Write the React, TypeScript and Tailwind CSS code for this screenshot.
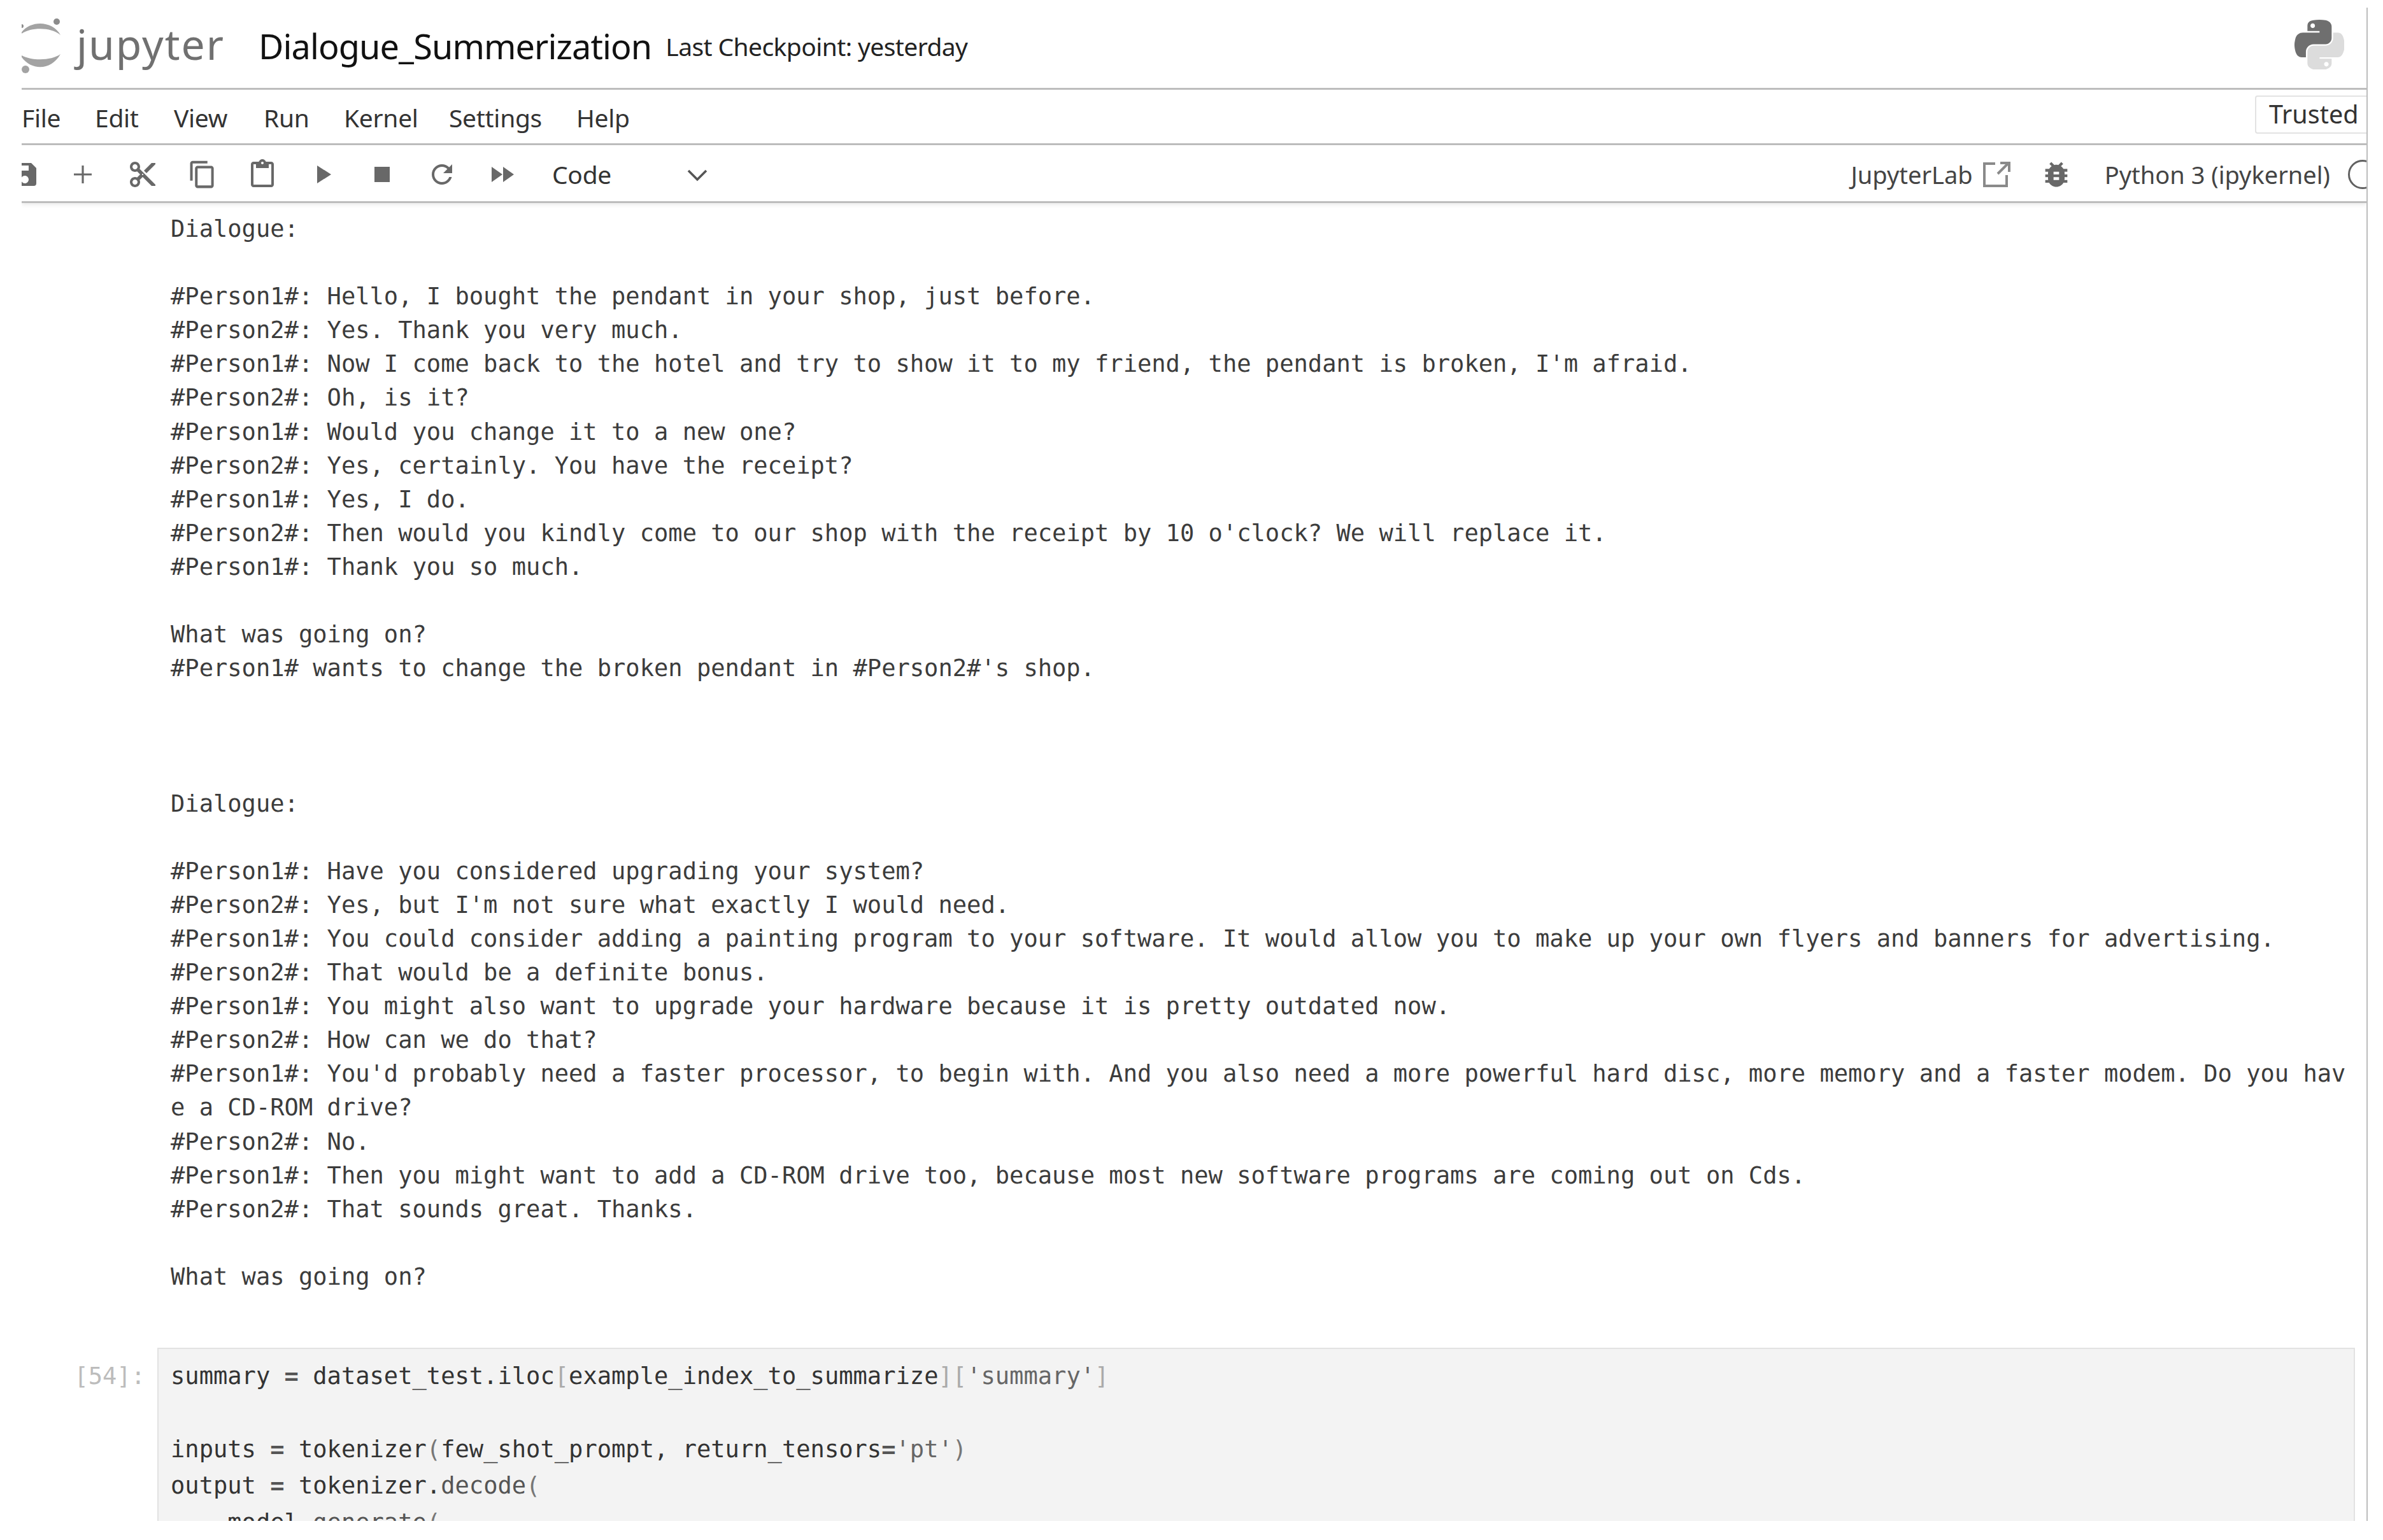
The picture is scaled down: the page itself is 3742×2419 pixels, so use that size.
import type { ReactNode } from "react";

const uiFont = "font-['Noto_Sans',sans-serif]";
const monoFont = "font-['DejaVu_Sans_Mono',monospace]";

const menuItems = [
  { name: "File", width: "w-[115px]" },
  { name: "Edit", width: "w-[124px]" },
  { name: "View", width: "w-[141px]" },
  { name: "Run", width: "w-[126px]" },
  { name: "Kernel", width: "w-[165px]" },
  { name: "Settings", width: "w-[200px]" },
  { name: "Help", width: "w-[110px]" },
];

const output = `Dialogue:

#Person1#: Hello, I bought the pendant in your shop, just before.
#Person2#: Yes. Thank you very much.
#Person1#: Now I come back to the hotel and try to show it to my friend, the pendant is broken, I'm afraid.
#Person2#: Oh, is it?
#Person1#: Would you change it to a new one?
#Person2#: Yes, certainly. You have the receipt?
#Person1#: Yes, I do.
#Person2#: Then would you kindly come to our shop with the receipt by 10 o'clock? We will replace it.
#Person1#: Thank you so much.

What was going on?
#Person1# wants to change the broken pendant in #Person2#'s shop.



Dialogue:

#Person1#: Have you considered upgrading your system?
#Person2#: Yes, but I'm not sure what exactly I would need.
#Person1#: You could consider adding a painting program to your software. It would allow you to make up your own flyers and banners for advertising.
#Person2#: That would be a definite bonus.
#Person1#: You might also want to upgrade your hardware because it is pretty outdated now.
#Person2#: How can we do that?
#Person1#: You'd probably need a faster processor, to begin with. And you also need a more powerful hard disc, more memory and a faster modem. Do you hav
e a CD-ROM drive?
#Person2#: No.
#Person1#: Then you might want to add a CD-ROM drive too, because most new software programs are coming out on Cds.
#Person2#: That sounds great. Thanks.

What was going on?`;

function Icon({ d, className = "w-12 h-12", viewBox = "0 0 24 24" }: { d: string; className?: string; viewBox?: string }) {
  return (
    <svg viewBox={viewBox} className={className} fill="#686868">
      <path d={d} />
    </svg>
  );
}

function ToolButton({ children }: { children: ReactNode }) {
  return <div className="flex w-[94px] shrink-0 items-center justify-center">{children}</div>;
}

function JupyterLogo() {
  return (
    <div className="flex items-center">
      <svg viewBox="0 0 66 90" className="h-[90px] w-[66px] shrink-0">
        <path d="M-3 30C10 6 48 6 61 30C46 17 12 17 -3 30Z" fill="#a3a3a3" />
        <path d="M-3 60C12 87 46 87 61 60C46 71 12 71 -3 60Z" fill="#a3a3a3" />
        <circle cx="55" cy="9" r="5" fill="#8c8c8c" />
        <circle cx="0" cy="16" r="3" fill="#8c8c8c" />
        <circle cx="6" cy="84" r="6" fill="#a3a3a3" />
      </svg>
      <span className="ml-[20px] w-[286px] -mt-[4px] text-[66px] leading-none tracking-[2px] text-[#707070]">jupyter</span>
    </div>
  );
}

function PythonLogo() {
  return (
    <svg viewBox="0 0 110 110" className="w-[78px] h-[78px]">
      <path
        fill="#6f6f6f"
        d="M54.9 0C50.3 0 46 .4 42.1 1.1 30.8 3.1 28.7 7.3 28.7 15v10.2h26.8v3.4H18.6c-7.8 0-14.6 4.7-16.7 13.6-2.5 10.2-2.6 16.6 0 27.3 1.9 7.9 6.5 13.6 14.2 13.6h9.2V71c0-8.8 7.7-16.7 16.8-16.7h26.8c7.4 0 13.4-6.1 13.4-13.6V15c0-7.3-6.1-12.7-13.4-13.9C64.3.3 59.5 0 54.9 0Zm-14.5 8.2c2.8 0 5 2.3 5 5.1 0 2.8-2.2 5.1-5 5.1s-5-2.3-5-5.1c0-2.8 2.2-5.1 5-5.1Z"
      />
      <path
        fill="#dcdcdc"
        d="M85.6 28.7v11.9c0 9.2-7.8 17-16.8 17H42.1c-7.3 0-13.4 6.3-13.4 13.6v25.5c0 7.3 6.3 11.5 13.4 13.6 8.5 2.5 16.6 2.9 26.8 0 6.7-2 13.4-5.9 13.4-13.6V86.5H55.5v-3.4h40.2c7.8 0 10.7-5.4 13.4-13.6 2.8-8.4 2.7-16.5 0-27.2-1.9-7.8-5.6-13.6-13.4-13.6ZM70.6 93.3c2.8 0 5 2.3 5 5.1s-2.2 5.1-5 5.1-5-2.3-5-5.1 2.2-5.1 5-5.1Z"
      />
    </svg>
  );
}

export default function App() {
  return (
    <div className="min-h-[2419px] bg-white pt-[12px] pl-[34px]">
      <div className={`h-[2377px] w-[3684px] overflow-hidden border-r-2 border-[#bdbdbd] ${uiFont}`}>
        {/* top bar */}
        <header className="flex h-[129px] items-center justify-between border-b-[3px] border-[#bdbdbd] pb-[10px] pr-[35px]">
          <div className="flex items-center">
            <JupyterLogo />
            <span className="mt-[4px] text-[54px] leading-none tracking-[-0.9px] text-[#111]">Dialogue_Summerization</span>
            <span className="ml-[22px] mt-[4px] text-[39px] leading-none tracking-[-0.6px] text-[#222]">Last Checkpoint: yesterday</span>
          </div>
          <PythonLogo />
        </header>

        {/* menu */}
        <nav className="flex h-[87px] items-center justify-between border-b-[3px] border-[#bdbdbd]">
          <div className="flex items-center pt-[4px] text-[39px] tracking-[-0.3px] text-[#333]">
            {menuItems.map((item) => (
              <span key={item.name} className={item.width}>{item.name}</span>
            ))}
          </div>
          <div className="mb-[6px] flex h-[60px] w-[175px] items-center rounded-l-[4px] border-2 border-r-0 border-[#e3e3e3] pl-[20px] text-[39.5px] text-[#333]">Trusted</div>
        </nav>

        {/* toolbar */}
        <div className="flex h-[91px] items-center justify-between overflow-hidden border-b-[3px] border-[#bdbdbd] pt-[4px] shadow-[0_3px_6px_rgba(0,0,0,0.08)]">
          <div className="flex items-center">
            <div className="w-[49px] overflow-hidden">
              <div className="-ml-[19px] w-12">
                <Icon d="M17 3H5a2 2 0 0 0-2 2v14c0 1.1.9 2 2 2h14a2 2 0 0 0 2-2V7l-4-4zm-5 16c-1.66 0-3-1.34-3-3s1.34-3 3-3 3 1.34 3 3-1.34 3-3 3zm3-10H5V5h10v4z" />
              </div>
            </div>
            <ToolButton><Icon d="M19 12.8h-6.2V19h-1.6v-6.2H5v-1.6h6.2V5h1.6v6.2H19v1.6z" /></ToolButton>
            <ToolButton><Icon d="M9.64 7.64c.23-.5.36-1.05.36-1.64 0-2.21-1.79-4-4-4S2 3.79 2 6s1.79 4 4 4c.59 0 1.14-.13 1.64-.36L10 12l-2.36 2.36C7.14 14.13 6.59 14 6 14c-2.21 0-4 1.79-4 4s1.79 4 4 4 4-1.79 4-4c0-.59-.13-1.14-.36-1.64L12 14l7 7h3v-1L9.64 7.64zM6 8c-1.1 0-2-.89-2-2s.9-2 2-2 2 .89 2 2-.9 2-2 2zm0 12c-1.1 0-2-.89-2-2s.9-2 2-2 2 .89 2 2-.9 2-2 2zm6-7.5c-.28 0-.5-.22-.5-.5s.22-.5.5-.5.5.22.5.5-.22.5-.5.5zM19 3l-6 6 2 2 7-7V3z" /></ToolButton>
            <ToolButton><Icon viewBox="0 0 18 18" d="M11.9 1H3.2C2.4 1 1.7 1.7 1.7 2.5v10.2h1.5V2.5h8.7V1zM14.1 3.9h-8c-.8 0-1.5.7-1.5 1.5v10.2c0 .8.7 1.5 1.5 1.5h8c.8 0 1.5-.7 1.5-1.5V5.4c0-.8-.7-1.5-1.5-1.5zm0 11.6h-8V5.4h8v10.1z" /></ToolButton>
            <ToolButton><Icon d="M19 2h-4.18C14.4.84 13.3 0 12 0c-1.3 0-2.4.84-2.82 2H5c-1.1 0-2 .9-2 2v16c0 1.1.9 2 2 2h14c1.1 0 2-.9 2-2V4c0-1.1-.9-2-2-2zm-7 0c.55 0 1 .45 1 1s-.45 1-1 1-1-.45-1-1 .45-1 1-1zm7 18H5V4h2v3h10V4h2v16z" /></ToolButton>
            <ToolButton><Icon d="M8 5v14l11-7z" /></ToolButton>
            <ToolButton><Icon d="M6 6h12v12H6z" /></ToolButton>
            <ToolButton><Icon d="M17.65 6.35C16.2 4.9 14.21 4 12 4c-4.42 0-7.99 3.58-7.99 8s3.57 8 7.99 8c3.73 0 6.84-2.55 7.73-6h-2.08c-.82 2.33-3.04 4-5.65 4-3.31 0-6-2.69-6-6s2.69-6 6-6c1.66 0 3.14.69 4.22 1.78L13 11h7V4l-2.35 2.35z" /></ToolButton>
            <ToolButton><Icon d="M4 18l8.5-6L4 6v12zm9-12v12l8.5-6L13 6z" /></ToolButton>
            <div className="ml-[32px] flex w-[252px] items-center justify-between text-[39px] tracking-[-0.3px] text-[#333]">
              <span>Code</span>
              <svg viewBox="0 0 24 24" className="h-[48px] w-[48px]" fill="none" stroke="#555" strokeWidth="1.8">
                <path d="M5 9l7 7 7-7" />
              </svg>
            </div>
          </div>
          <div className="flex items-center text-[38px] text-[#444]">
            <span>JupyterLab</span>
            <svg viewBox="0 0 43 43" className="ml-[16px] h-[43px] w-[43px]" fill="none" stroke="#8a8a8a" strokeWidth="4">
              <path d="M19 4H2v35h35V22" />
              <path d="M23 20L40 3M27 3h14v14" />
            </svg>
            <Icon className="ml-[46px] h-[52px] w-[52px]" d="M20 8h-2.81c-.45-.78-1.07-1.45-1.82-1.96L17 4.41 15.59 3l-2.17 2.17C12.96 5.06 12.49 5 12 5c-.49 0-.96.06-1.41.17L8.41 3 7 4.41l1.62 1.63C7.88 6.55 7.26 7.22 6.81 8H4v2h2.09c-.05.33-.09.66-.09 1v1H4v2h2v1c0 .34.04.67.09 1H4v2h2.81c1.04 1.79 2.97 3 5.19 3s4.15-1.21 5.19-3H20v-2h-2.09c.05-.33.09-.66.09-1v-1h2v-2h-2v-1c0-.34-.04-.67-.09-1H20V8zm-6 8h-4v-2h4v2zm0-4h-4v-2h4v2z" />
            <span className="ml-[50px]">Python 3 (ipykernel)</span>
            <div className="ml-[28px] h-[46px] w-[29px] overflow-hidden">
              <div className="h-[46px] w-[46px] rounded-full border-[3px] border-[#616161]" />
            </div>
          </div>
        </div>

        {/* notebook output */}
        <main className={`pt-[14px] text-[37.1px] ${monoFont}`}>
          <pre className="ml-[234px] font-[inherit] text-[37.1px] leading-[53.1px] text-[#3c3c3c]">{output}</pre>

          <div className="mt-[85px] flex">
            <div className="w-[213px] shrink-0 pr-[19px] pt-[16px] text-right leading-[57px] text-[#bcbcbc]">[54]:</div>
            <div className="mr-[18px] flex-1 border-2 border-[#e2e2e2] bg-[#f3f3f3] pl-[19px] pt-[14px]">
              <pre className="font-[inherit] text-[37.1px] leading-[57.4px] text-[#333]">
                <span>summary </span><span className="font-bold text-[#555]">=</span><span> dataset_test.iloc</span><span className="text-[#aaa]">[</span><span>example_index_to_summarize</span><span className="text-[#aaa]">][</span><span className="text-[#666]">'summary'</span><span className="text-[#aaa]">]</span>
                {"\n\n"}
                <span>inputs </span><span className="font-bold text-[#555]">=</span><span> tokenizer</span><span className="text-[#777]">(</span><span>few_shot_prompt, return_tensors</span><span className="font-bold text-[#555]">=</span><span className="text-[#666]">'pt'</span><span className="text-[#777]">)</span>
                {"\n"}
                <span>output </span><span className="font-bold text-[#555]">=</span><span> tokenizer.</span><span className="text-[#555]">decode</span><span className="text-[#777]">(</span>
                {"\n"}
                <span>    model.</span><span className="text-[#555]">generate</span><span className="text-[#777]">(</span>
                {"\n"}
              </pre>
            </div>
          </div>
        </main>
      </div>
    </div>
  );
}
